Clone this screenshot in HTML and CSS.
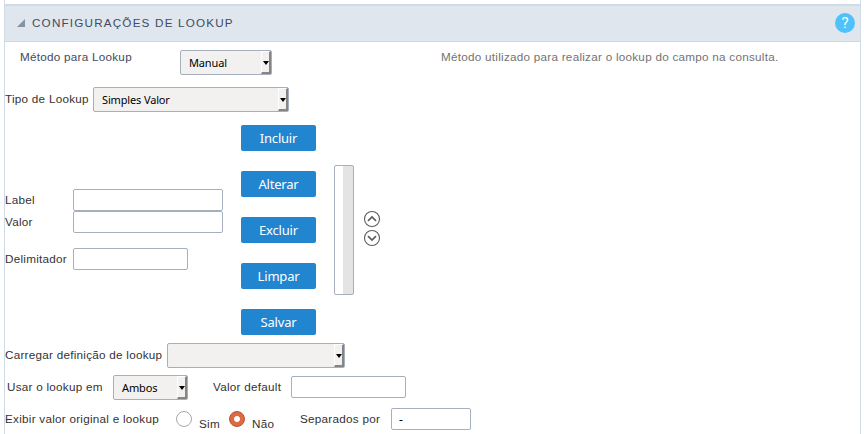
FILE: index.html
```html
<!DOCTYPE html>
<html lang="pt-BR">
<head>
<meta charset="utf-8">
<title>Configurações de Lookup</title>
<link rel="stylesheet" href="styles.css">
</head>
<body>
<section class="panel">
  <header class="head">
    <svg class="tri" width="8" height="8" viewBox="0 0 8 8"><path d="M8 0V8H0Z" fill="#8392a6"/></svg>
    <h1>CONFIGURAÇÕES DE LOOKUP</h1>
    <span class="help">?</span>
  </header>

  <div class="row method">
    <label class="method-label">Método para Lookup</label>
    <div class="select method-select"><span>Manual</span><i class="arrow"></i></div>
    <p class="hint">Método utilizado para realizar o lookup do campo na consulta.</p>
  </div>

  <div class="row type">
    <label class="type-label">Tipo de Lookup</label>
    <div class="select type-select"><span>Simples Valor</span><i class="arrow"></i></div>
  </div>

  <div class="editor">
    <div class="fields">
      <div class="field"><label>Label</label><input class="wide"></div>
      <div class="field"><label>Valor</label><input class="wide"></div>
      <div class="field delimiter"><label>Delimitador</label><input class="mid"></div>
    </div>
    <div class="buttons">
      <button>Incluir</button>
      <button>Alterar</button>
      <button>Excluir</button>
      <button>Limpar</button>
      <button>Salvar</button>
    </div>
    <div class="list"></div>
    <div class="order">
      <svg width="18" height="18" viewBox="0 0 18 18" fill="none" stroke="#5c5c5c"><circle cx="9" cy="9" r="7.5" stroke-width="1.1"/><path d="M5 10.8 9 7l4 3.8" stroke-width="1.7"/></svg>
      <svg width="18" height="18" viewBox="0 0 18 18" fill="none" stroke="#5c5c5c"><circle cx="9" cy="9" r="7.5" stroke-width="1.1"/><path d="M5 7.2 9 11l4-3.8" stroke-width="1.7"/></svg>
    </div>
  </div>

  <div class="row load">
    <label class="load-label">Carregar definição de lookup</label>
    <div class="select load-select"><span></span><i class="arrow"></i></div>
  </div>

  <div class="row usage">
    <label class="usage-label">Usar o lookup em</label>
    <div class="select usage-select"><span>Ambos</span><i class="arrow"></i></div>
    <label class="default-label">Valor default</label>
    <input class="mid">
  </div>

  <div class="row show">
    <label class="show-label">Exibir valor original e lookup</label>
    <span class="radio"></span><label class="option yes">Sim</label>
    <span class="radio on"></span><label class="option no">Não</label>
    <label class="sep-label">Separados por</label>
    <input class="small" value="-">
  </div>
</section>
</body>
</html>
```
FILE: styles.css
```css
* { box-sizing: border-box; }
html, body { height: 100%; overflow: hidden; }
body {
  margin: 0;
  background: #fff;
  color: #333;
  font: 11.7px/16px "Liberation Sans", Arial, sans-serif;
  letter-spacing: 0.26px;
}
.panel {
  width: 857px;
  height: 434px;
  margin-left: 4px;
  padding-top: 4px;
  border: solid #d0dce5;
  border-width: 0 1px;
}
.head {
  display: flex;
  align-items: center;
  height: 38px;
  padding: 0 5px 1px 12px;
  background: #dfe6ee;
  border-top: 2px solid #d0dce5;
  border-bottom: 1px solid #cddae3;
}
.tri { margin-right: 7px; }
h1 {
  flex: 1;
  margin: 0;
  color: #414b61;
  font-size: 11.7px;
  font-weight: 400;
  letter-spacing: 1.18px;
}
.help {
  width: 20px;
  height: 20px;
  border-radius: 50%;
  background: #4fc1fb;
  color: #fff;
  font: 15px/20px Roboto, sans-serif;
  letter-spacing: 0;
  text-align: center;
}
label { flex: none; white-space: nowrap; }
.row { display: flex; align-items: center; }
.select {
  display: flex;
  flex: none;
  height: 25px;
  padding-left: 8px;
  border: 1px solid #a6afbd;
  border-radius: 2px;
  background: #f2f1f0;
  color: #000;
  font: 11px/24px "Noto Sans", sans-serif;
  letter-spacing: -0.15px;
}
.select span { flex: 1; white-space: nowrap; }
.arrow {
  display: flex;
  align-items: center;
  justify-content: center;
  width: 10px;
  height: 23px;
  border: solid;
  border-width: 1px 2px 2px 1px;
  border-color: #fff #858585 #858585 #fff;
  background: #f2f1f0;
}
.arrow::before {
  content: "";
  margin-top: 2px;
  border: 3px solid transparent;
  border-top: 4px solid #000;
  border-bottom: 0;
}
input {
  height: 22px;
  padding: 0 7px;
  border: 1px solid #a6afbd;
  border-radius: 2px;
  background: #fff;
  color: #000;
  font: 12px "Noto Sans", sans-serif;
}
.wide { width: 150px; }
.mid { width: 115px; }
.small { width: 80px; }

.method { height: 25px; margin-top: 8px; }
.method-label { width: 175px; padding-left: 15px; margin-top: -11px; color: #414b61; }
.method-select { width: 92px; }
.hint { margin: -11px 0 0 169px; color: #737373; white-space: nowrap; }
.type { margin-top: 12px; }
.type-label { width: 88px; padding-bottom: 2px; }
.type-select { width: 196px; }

.editor { display: flex; height: 211px; margin-top: 13px; }
.fields { width: 236px; padding-top: 64px; }
.field { display: flex; align-items: center; }
.field label { width: 68px; }
.delimiter { margin-top: 15px; }
.buttons { display: flex; flex-direction: column; gap: 20px; }
button {
  width: 75px;
  height: 26px;
  padding: 0;
  border: 0;
  border-radius: 2px;
  background: #2185d0;
  color: #fff;
  font: 13px/26px "Noto Sans", sans-serif;
  letter-spacing: -0.2px;
}
.list {
  width: 20px;
  height: 130px;
  margin: 40px 0 0 18px;
  border: 1px solid #a6afbd;
  border-radius: 2px;
  background: linear-gradient(90deg, #fff 8px, #e4e4e4 8px);
}
.order { display: flex; flex-direction: column; gap: 1px; margin: 85px 0 0 9px; }
.load { height: 25px; margin-top: 7px; }
.load-label { width: 162px; padding-bottom: 2px; }
.load-select { width: 178px; }
.usage { height: 25px; margin-top: 7px; }
.usage-label { width: 108px; padding: 0 0 2px 2px; }
.usage-select { width: 75px; }
.default-label { width: 103px; padding: 0 0 2px 25px; }
.usage input { margin-bottom: 2px; }
.show { height: 22px; margin-top: 8px; }
.show-label { width: 171px; }
.radio {
  width: 16px;
  height: 16px;
  border: 1px solid #a8a8a8;
  border-radius: 50%;
  background: #fff;
}
.radio.on {
  border-color: #b5532d;
  background: radial-gradient(circle, #fff 0 2.5px, #dd6a40 3.5px);
}
.option { padding: 10px 0 0 7px; }
.yes { width: 37px; }
.no { width: 55px; }
.sep-label { width: 91px; }
```
